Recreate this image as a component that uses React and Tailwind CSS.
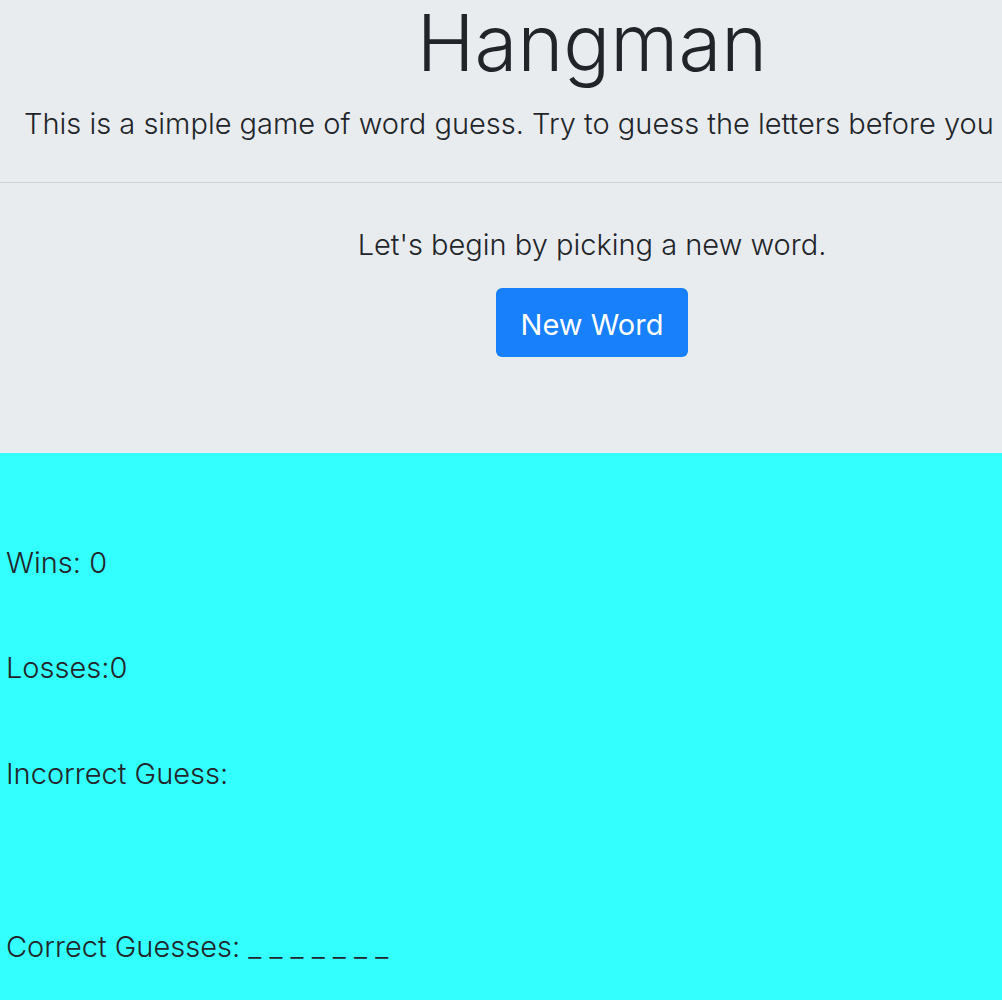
import React from "react";

export default function App() {
  const word = "_ _ _ _ _ _ _";

  return (
    <div className="w-full overflow-hidden font-['Inter',sans-serif] text-[#212529]">
      <div className="bg-[#e9ecef] pb-24">
        <h1 className="pl-[182px] text-center text-[78px] font-light leading-[1.1]">Hangman</h1>
        <p className="px-6 text-[29px] font-light mt-[16px] whitespace-nowrap">
          This is a simple game of word guess. Try to guess the letters before you get hung!
        </p>
        <hr className="mt-[37px] border-t border-[#d2d4d7]" />
        <div className="flex flex-col items-center pl-[182px] pt-10">
          <p className="text-[29px] font-light">Let's begin by picking a new word.</p>
          <button className="mt-[21px] h-[69px] w-[192px] rounded-md bg-[#1780fa] pt-1 text-[29px] text-white">
            New Word
          </button>
        </div>
      </div>
      <div className="bg-[#33ffff] px-1.5 pt-[88px] pb-10 text-[29px] font-light">
        <p>Wins: 0</p>
        <p className="mt-[62px]">Losses:0</p>
        <p className="mt-[62px]">Incorrect Guess:</p>
        <p className="mt-[130px]">Correct Guesses: {word}</p>
      </div>
    </div>
  );
}
